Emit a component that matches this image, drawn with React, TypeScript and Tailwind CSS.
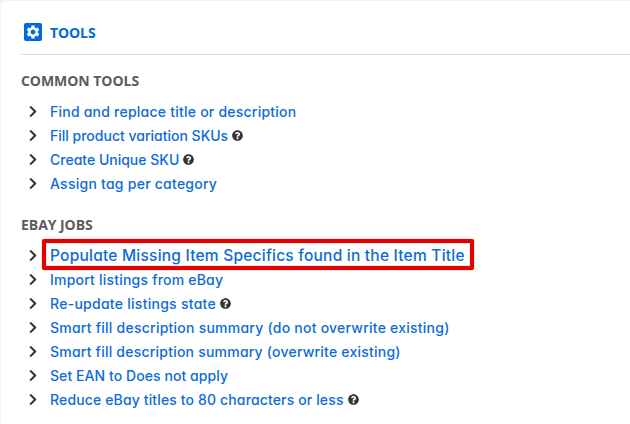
import React from "react";
import { FaChevronRight, FaQuestionCircle } from "react-icons/fa";
import { MdSettings } from "react-icons/md";

type Tool = { label: string; spacing: string; help?: boolean; highlighted?: boolean };

const commonTools: Tool[] = [
  { label: "Find and replace title or description", spacing: "tracking-[0.23px]" },
  { label: "Fill product variation SKUs", spacing: "tracking-[0px]", help: true },
  { label: "Create Unique SKU", spacing: "tracking-[0px]", help: true },
  { label: "Assign tag per category", spacing: "tracking-[0.25px]" },
];

const ebayJobs: Tool[] = [
  { label: "Populate Missing Item Specifics found in the Item Title", spacing: "tracking-[0.225px]", highlighted: true },
  { label: "Import listings from eBay", spacing: "tracking-[0.21px]" },
  { label: "Re-update listings state", spacing: "tracking-[0.27px]", help: true },
  { label: "Smart fill description summary (do not overwrite existing)", spacing: "tracking-[0.24px]" },
  { label: "Smart fill description summary (overwrite existing)", spacing: "tracking-[0.22px]" },
  { label: "Set EAN to Does not apply", spacing: "tracking-[0.07px]" },
  { label: "Reduce eBay titles to 80 characters or less", spacing: "tracking-[0.14px]", help: true },
];

function ToolRow({ tool }: { tool: Tool }) {
  return (
    <li className="relative flex h-6 items-center whitespace-nowrap">
      <FaChevronRight className="ml-[7px] h-[13px] w-[10px] shrink-0 text-[#333]" />
      {tool.highlighted && (
        <span className="absolute -top-1 left-[21px] h-[31px] w-[432px] rounded-[2px] border-4 border-[#e60000] shadow-[0_0_1px_#333,inset_0_0_1px_#333]" />
      )}
      <a
        className={`ml-3 font-['Inter',sans-serif] font-medium text-[#0d6bd8] [font-feature-settings:'cv11'] ${
          tool.highlighted ? "pt-0.5 text-[15.5px]" : "text-[14px]"
        } ${tool.spacing}`}
      >
        {tool.label}
      </a>
      {tool.help && <FaQuestionCircle className="ml-1 size-[11px] shrink-0 text-[#333]" />}
    </li>
  );
}

function Section({ title, tools }: { title: string; tools: Tool[] }) {
  return (
    <section>
      <h3 className="font-['Open_Sans',sans-serif] text-[14px] leading-5 font-bold tracking-[-0.05px] text-[#5c5c5c]">
        {title}
      </h3>
      <ul className="mt-2">
        {tools.map((tool) => (
          <ToolRow key={tool.label} tool={tool} />
        ))}
      </ul>
    </section>
  );
}

export default function App() {
  return (
    <div className="h-[424px] w-[630px] overflow-hidden bg-[#f2f2f2] pt-px pl-px">
      <main className="h-full rounded-tl-[5px] bg-white pt-[22px] pl-5">
        <header className="flex h-8 items-start border-b border-[#dedede]">
          <span className="ml-[3px] flex size-[18px] items-center justify-center rounded-[2px] bg-[#0068e0]">
            <MdSettings className="size-4 text-white" />
          </span>
          <h2 className="ml-2 font-['Open_Sans',sans-serif] text-[14px] leading-5 font-bold tracking-[-0.1px] text-[#0068e0]">
            TOOLS
          </h2>
        </header>
        <div className="flex flex-col gap-5 pt-4">
          <Section title="COMMON TOOLS" tools={commonTools} />
          <Section title="EBAY JOBS" tools={ebayJobs} />
        </div>
      </main>
    </div>
  );
}
